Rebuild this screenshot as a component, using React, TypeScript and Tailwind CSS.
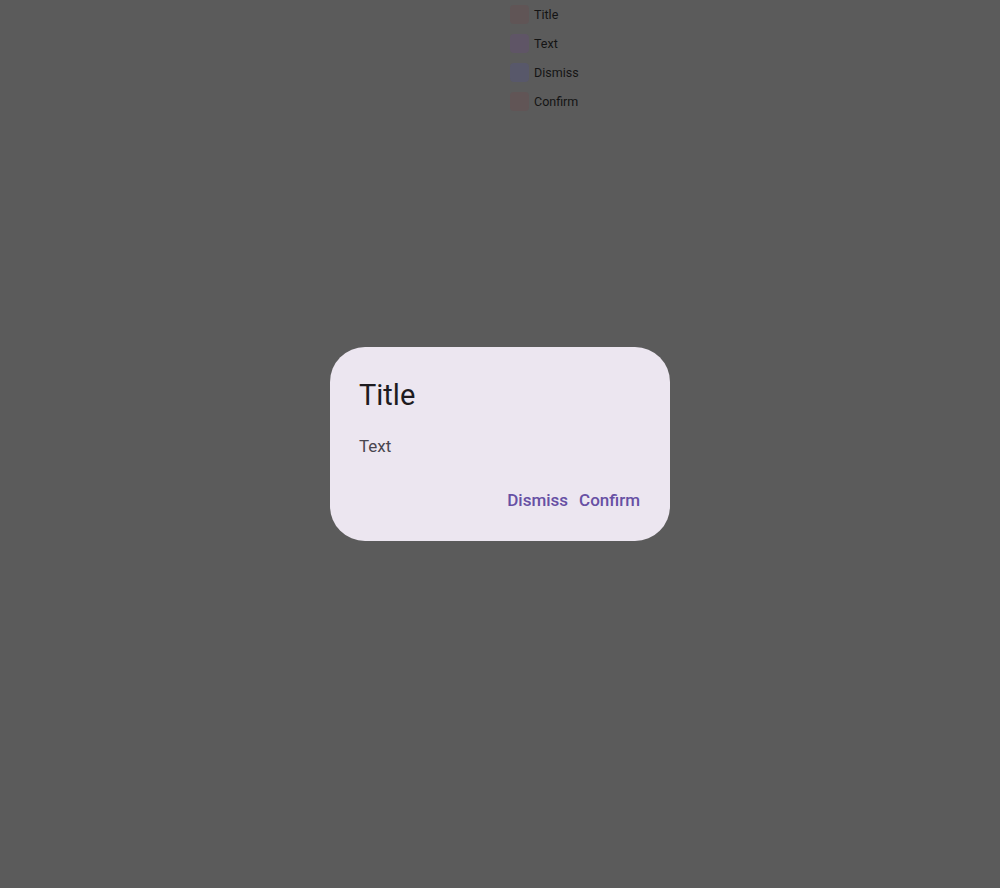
const legend = [
  { label: 'Title', swatch: 'bg-[#605556]' },
  { label: 'Text', swatch: 'bg-[#5f5566]' },
  { label: 'Dismiss', swatch: 'bg-[#58586a]' },
  { label: 'Confirm', swatch: 'bg-[#615556]' },
];

export default function App() {
  return (
    <div
      className="relative h-[888px] w-[1000px] overflow-hidden bg-[#5b5b5b]"
      style={{ fontFamily: 'Roboto, "Noto Sans", sans-serif' }}
    >
      <ul className="ml-[510px] flex flex-col gap-[10px] pt-[5px]">
        {legend.map((item) => (
          <li key={item.label} className="flex h-[19px] items-center gap-[5px]">
            <span className={`h-[19px] w-[19px] rounded-[4px] ${item.swatch}`} />
            <span className="pt-px text-[12.5px] leading-none text-[#141414]">{item.label}</span>
          </li>
        ))}
      </ul>

      <div className="absolute inset-0 flex items-center justify-center">
        <div
          role="dialog"
          className="flex h-[194px] w-[340px] flex-col rounded-[35px] bg-[#ece6f0] px-[29px] pt-[28px]"
        >
          <h2 className="text-[29px] font-normal leading-[40px] text-[#1d1b20]">Title</h2>
          <p className="mt-[19px] text-[17px] leading-[25px] text-[#49454f]">Text</p>
          <div className="mt-[16px] flex h-[50px] items-center justify-end gap-[11px] pr-px">
            <button
              type="button"
              className="text-[17px] font-medium leading-[25px] text-[#6750a4]"
            >
              Dismiss
            </button>
            <button
              type="button"
              className="text-[17px] font-medium leading-[25px] text-[#6750a4]"
            >
              Confirm
            </button>
          </div>
        </div>
      </div>
    </div>
  );
}
